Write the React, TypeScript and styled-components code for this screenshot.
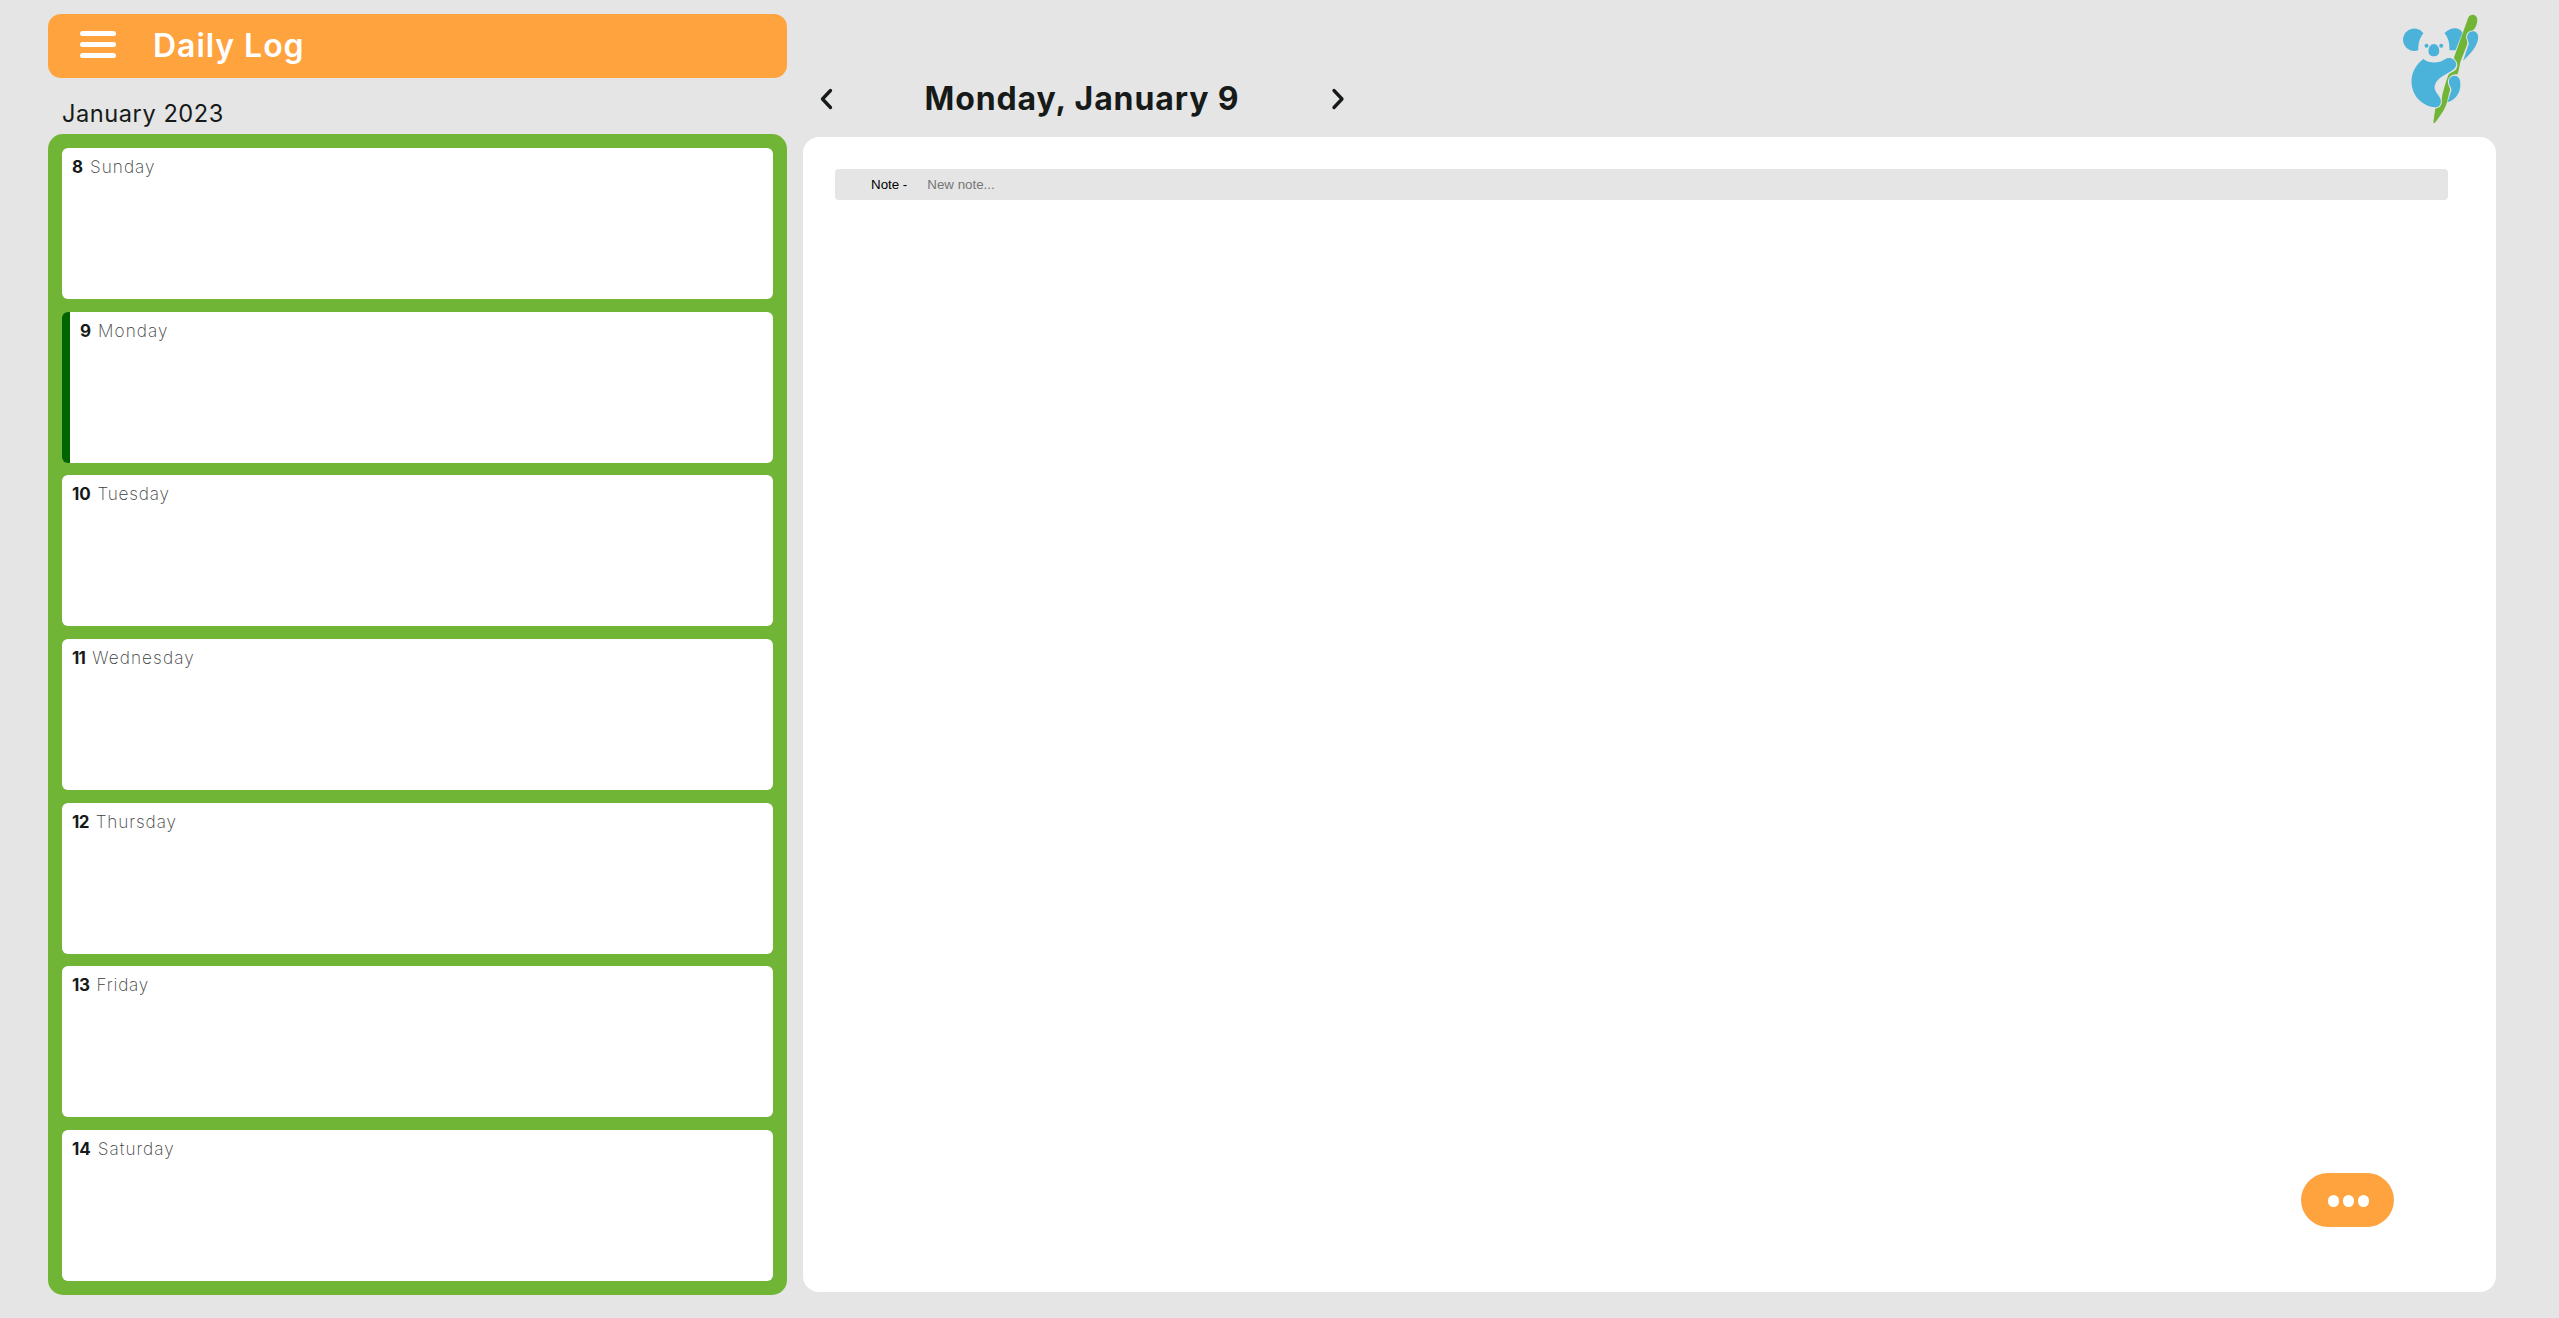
import React from "react";
import styled, { createGlobalStyle } from "styled-components";

const Global = createGlobalStyle`
  * { box-sizing: border-box; }
  body { margin: 0; background: #e5e5e5; font-family: Inter, "Open Sans", sans-serif; color: #161a18; }
  button { border: 0; padding: 0; background: none; font: inherit; color: inherit; }
`;
const Page = styled.div`
  display: flex; gap: 16px; height: 1318px; padding: 14px 63px 0 48px;
`;
const Sidebar = styled.aside`
  width: 739px; display: flex; flex-direction: column;
`;
const Header = styled.header`
  height: 64px; border-radius: 13px; background: #ffa33f; display: flex; align-items: center; padding-left: 32px;
`;
const Burger = styled.button`
  width: 36px; display: grid; gap: 6px; margin: -3px 37px 0 0;
`;
const Bar = styled.span`
  height: 5px; border-radius: 2.5px; background: #fff;
`;
const Title = styled.h1`
  margin: 0; font-size: 32px; line-height: 40px; font-weight: 600; letter-spacing: 0.95px; color: #fff;
`;
const Month = styled.h2`
  margin: 0; height: 56px; padding: 20px 0 0 14px; font-size: 23.6px; line-height: 32px; font-weight: 400; letter-spacing: 0.55px;
`;
const Week = styled.div`
  height: 1161px; padding: 14px; border-radius: 15px; background: #71b536;
  display: flex; flex-direction: column; gap: 12.7px;
`;
const DayCard = styled.section<{ $today?: boolean }>`
  flex: 1; border-radius: 6px; background: #fff; padding: 8px 10px; display: flex; align-items: flex-start; gap: 7px;
  ${(p) => p.$today && "border-left: 8px solid #006400;"}
`;
const DayNumber = styled.span<{ $track: number }>`
  font-size: 17px; line-height: 22px; font-weight: 700; letter-spacing: ${(p) => p.$track}px;
`;
const DayName = styled.span<{ $track: number }>`
  font-size: 17.2px; line-height: 22px; font-weight: 200; color: #3c403e; letter-spacing: ${(p) => p.$track}px;
`;
const Main = styled.main`
  flex: 1; display: flex; flex-direction: column;
`;
const TopBar = styled.div`
  height: 123px; display: flex; justify-content: space-between; padding-right: 12px;
`;
const DateNav = styled.nav`
  display: flex; align-items: center; width: 526px; height: 42px; margin: 64px 0 0 16px; justify-content: space-between;
`;
const Arrow = styled.button`
  display: flex;
`;
const DateTitle = styled.h2`
  margin: 0; font-size: 32px; line-height: 42px; font-weight: 700; letter-spacing: 0.9px; white-space: nowrap;
`;
const Panel = styled.div`
  height: 1155px; padding: 32px 48px 65px 32px; border-radius: 16px; background: #fff;
  display: flex; flex-direction: column; justify-content: space-between;
`;
const NoteRow = styled.label`
  height: 31px; border-radius: 4px; background: #e5e5e5; padding-left: 36px; display: flex; align-items: center; gap: 20px;
  font: 13.333px/16px "Liberation Sans", Arial, sans-serif; color: #000;
`;
const NoteInput = styled.input`
  flex: 1; border: 0; padding: 0; background: transparent; font: inherit; outline: 0;
  &::placeholder { color: #757575; }
`;
const MoreButton = styled.button`
  align-self: flex-end; width: 93px; height: 54px; border-radius: 27px; margin-right: 54px; background: #ffa33f;
  display: flex; align-items: center; justify-content: center; gap: 3.7px; padding: 2px 0 0 2px;
`;
const Dot = styled.span`
  width: 11.5px; height: 11.5px; border-radius: 50%; background: #fff;
`;
const Logo = styled.svg`
  flex: none; margin-top: -4px;
`;

const DAYS = [
  { n: 8, name: "Sunday", numberTrack: 0, nameTrack: 1 },
  { n: 9, name: "Monday", today: true, numberTrack: 0, nameTrack: 1.05 },
  { n: 10, name: "Tuesday", numberTrack: -0.2, nameTrack: 0.8 },
  { n: 11, name: "Wednesday", numberTrack: -0.75, nameTrack: 1.1 },
  { n: 12, name: "Thursday", numberTrack: -0.7, nameTrack: 0.9 },
  { n: 13, name: "Friday", numberTrack: -0.4, nameTrack: 0.8 },
  { n: 14, name: "Saturday", numberTrack: 0, nameTrack: 1 },
];

const Chevron = ({ d }: { d: string }) => (
  <svg width="14" height="22" viewBox="0 0 14 22" fill="none" stroke="#161a18" strokeWidth="3.3" strokeLinecap="round" strokeLinejoin="round">
    <path d={d} />
  </svg>
);

const Koala = () => (
  <Logo width="84" height="114" viewBox="20 10 84 114">
    <g fill="#4bb2d9">
      <path d="M43.4 33.3A11.2 11.2 0 1 0 38.3 50.2C38.2 43.5 39.5 38.2 43.4 33.3Z" />
      <path d="M64.5 33.3C70.5 26.5 80.5 27 82.4 33L75.5 50.3L69.5 50.2C69.6 43.5 68.6 38 64.5 33.3Z" />
      <circle cx="46.5" cy="45.7" r="2" />
      <circle cx="61.2" cy="45.7" r="2" />
      <path d="M53.8 44C57 44 59.2 47 59.2 51.3C59.2 54.8 57 56.3 53.8 56.3S48.5 54.8 48.5 51.3C48.5 47 50.7 44 53.8 44Z" />
      <path d="M43.3 59C49 63.8 59 63.8 65.5 59C69 56.6 75.8 58.6 76.2 64C76.3 67.5 74 69.4 70.5 71.5C61 76.8 54.8 80.5 54.6 87.3C54.5 93 61 96 60.9 101.5C60.8 105.3 58.5 107.4 55 107.3C42 106 31.5 95.5 31.5 81.2C31.5 72.5 36 64.5 43.3 59Z" />
      <path d="M88 34C90 30 98.3 30 98.2 37.5C97.8 46.5 89.5 54.5 83.2 60.7L88.8 43.8C89 41 85.5 38 88 34Z" />
      <path d="M69.2 79.5C70.5 74.5 78.8 74.2 80 80.5C82 90.5 76.5 100 67.5 102.2L71.5 90C71.5 87 67.8 84.3 69.2 79.5Z" />
    </g>
    <path fill="#71b536" d="M88.3 17.5C90.5 13 97.2 14.5 97.3 19.5C97.3 24 95.2 29 92.5 30.5C88 31 85.3 34 86.4 39C88 42.5 87.2 44.3 86.4 46.5L80.5 61.5C79 67 79.4 69.5 77.5 74.3C71 73.5 67.5 78 68 83C68.3 86.5 71 88 69.8 91C67.5 98.5 67.5 104 63.5 110.5C60 116 57.7 119.5 54.4 123.3L53.3 122.5L55.3 108.6C60.5 107.8 62.5 104.5 61.8 99C61.8 95 66.5 79 69 74C74 71 77.2 70.5 77.3 65C77.3 60.5 74.2 60 74 57.5Z" />
  </Logo>
);

export default function App() {
  return (
    <>
      <Global />
      <Page>
        <Sidebar>
          <Header>
            <Burger aria-label="Menu"><Bar /><Bar /><Bar /></Burger>
            <Title>Daily Log</Title>
          </Header>
          <Month>January 2023</Month>
          <Week>
            {DAYS.map((d) => (
              <DayCard key={d.n} $today={d.today}>
                <DayNumber $track={d.numberTrack}>{d.n}</DayNumber>
                <DayName $track={d.nameTrack}>{d.name}</DayName>
              </DayCard>
            ))}
          </Week>
        </Sidebar>
        <Main>
          <TopBar>
            <DateNav>
              <Arrow aria-label="Previous day"><Chevron d="M11.5 2.5L3.5 11L11.5 19.5" /></Arrow>
              <DateTitle>Monday, January 9</DateTitle>
              <Arrow aria-label="Next day"><Chevron d="M3 2.5L11 11L3 19.5" /></Arrow>
            </DateNav>
            <Koala />
          </TopBar>
          <Panel>
            <NoteRow>Note -<NoteInput placeholder="New note..." /></NoteRow>
            <MoreButton aria-label="More"><Dot /><Dot /><Dot /></MoreButton>
          </Panel>
        </Main>
      </Page>
    </>
  );
}
